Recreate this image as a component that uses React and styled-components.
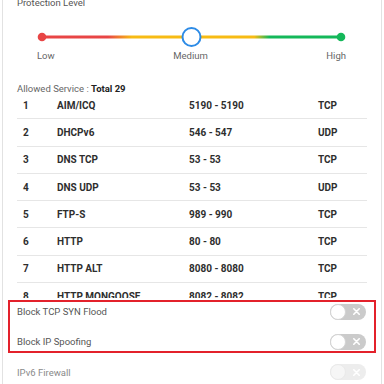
import React, { useEffect, useRef } from 'react';
import styled, { createGlobalStyle } from 'styled-components';

const GlobalStyle = createGlobalStyle`
	html, body {
		margin: 0;
		padding: 0;
		background: #fff;
		overflow: hidden;
	}
	body {
		font-family: Roboto, "Liberation Sans", Arial, sans-serif;
	}
`;

const Page = styled.div`
	height: 384px;
	overflow: hidden;
`;

const Card = styled.div`
	box-sizing: border-box;
	width: 380px;
	height: 400px;
	margin-left: 2px;
	padding: 0 14px;
	border-left: 1px solid #e2e2e2;
	border-right: 1px solid #e2e2e2;
`;

const Title = styled.div`
	margin-top: -3px;
	font-size: 9.5px;
	line-height: 12px;
	color: #555;
`;

const Slider = styled.div`
	margin-top: 16px;
	height: 24px;
	svg {
		display: block;
	}
`;

const SliderLabels = styled.div`
	display: flex;
	justify-content: space-between;
	margin: 1px 0 0 20px;
	width: 309px;
	font-size: 9.5px;
	line-height: 12px;
	color: #666;
`;

const Summary = styled.div`
	margin-top: 21px;
	font-size: 9.5px;
	line-height: 12px;
	color: #666;
	b {
		color: #222;
		font-weight: 700;
	}
`;

const ScrollArea = styled.div`
	margin-top: 6px;
	height: 196.5px;
	overflow: hidden;
`;

const Row = styled.div`
	box-sizing: border-box;
	display: grid;
	grid-template-columns: 34px 132px 129px 1fr;
	align-items: center;
	height: 27.3px;
	padding-left: 6px;
	border-bottom: 1px solid #e6e6e6;
	font-size: 10px;
	font-weight: 700;
	color: #2e2e2e;
`;

const Highlight = styled.div`
	display: flex;
	flex-direction: column;
	gap: 11px;
	margin: 2.5px -9px 0;
	padding: 0 8px 0 7px;
	border: 2px solid #e3212b;
`;

const OptionRow = styled.div`
	display: flex;
	align-items: center;
	justify-content: space-between;
	height: 19px;
	font-size: 9.5px;
	color: ${(p) => (p.disabled ? '#8a8a8a' : '#555')};
`;

const Plain = styled.div`
	margin-top: 9.5px;
	padding-right: 1px;
`;

const Toggle = styled.div`
	position: relative;
	box-sizing: border-box;
	width: 36px;
	height: 16px;
	border-radius: 8px;
	background: ${(p) => (p.disabled ? '#ededed' : '#cbcbcb')};
	&::before {
		content: '';
		position: absolute;
		left: 0;
		top: 0;
		box-sizing: border-box;
		width: 16px;
		height: 16px;
		border-radius: 50%;
		background: ${(p) => (p.disabled ? '#f6f6f6' : '#fff')};
		border: 1px solid ${(p) => (p.disabled ? '#eaeaea' : '#d4d4d4')};
	}
	svg {
		position: absolute;
		right: 6px;
		top: 4.5px;
	}
`;

const services = [
	['1', 'AIM/ICQ', '5190 - 5190', 'TCP'],
	['2', 'DHCPv6', '546 - 547', 'UDP'],
	['3', 'DNS TCP', '53 - 53', 'TCP'],
	['4', 'DNS UDP', '53 - 53', 'UDP'],
	['5', 'FTP-S', '989 - 990', 'TCP'],
	['6', 'HTTP', '80 - 80', 'TCP'],
	['7', 'HTTP ALT', '8080 - 8080', 'TCP'],
	['8', 'HTTP MONGOOSE', '8082 - 8082', 'TCP'],
	['9', 'HTTPS', '443 - 443', 'TCP'],
];

function Switch({ disabled }) {
	return (
		<Toggle disabled={disabled}>
			<svg width="7" height="7" viewBox="0 0 7 7">
				<path d="M0.8 0.8 L6.2 6.2 M6.2 0.8 L0.8 6.2" stroke="#fff" strokeWidth="1.6" strokeLinecap="round" />
			</svg>
		</Toggle>
	);
}

function LevelSlider() {
	return (
		<Slider>
			<svg width="350" height="24" viewBox="0 0 350 24">
				<defs>
					<linearGradient id="lvl" x1="25" x2="324" y1="0" y2="0" gradientUnits="userSpaceOnUse">
						<stop offset="0.22" stopColor="#e84545" />
						<stop offset="0.3" stopColor="#f7bb14" />
						<stop offset="0.71" stopColor="#f7bb14" />
						<stop offset="0.76" stopColor="#14b85a" />
					</linearGradient>
				</defs>
				<rect x="25" y="10.5" width="299" height="3" fill="url(#lvl)" />
				<circle cx="25" cy="12" r="4.3" fill="#e84545" />
				<circle cx="324" cy="12" r="4.3" fill="#14b85a" />
				<circle cx="174.5" cy="12" r="9" fill="#fff" stroke="#2d8be6" strokeWidth="2" />
			</svg>
		</Slider>
	);
}

export default function App() {
	const scrollRef = useRef(null);

	useEffect(() => {
		if (scrollRef.current) scrollRef.current.scrollTop = 9;
	}, []);

	return (
		<Page>
			<GlobalStyle />
			<Card>
				<Title>Protection Level</Title>
				<LevelSlider />
				<SliderLabels>
					<span>Low</span>
					<span>Medium</span>
					<span>High</span>
				</SliderLabels>
				<Summary>
					Allowed Service : <b>Total 29</b>
				</Summary>
				<ScrollArea ref={scrollRef}>
					{services.map((s) => (
						<Row key={s[0]}>
							<span>{s[0]}</span>
							<span>{s[1]}</span>
							<span>{s[2]}</span>
							<span>{s[3]}</span>
						</Row>
					))}
				</ScrollArea>
				<Highlight>
					<OptionRow>
						<span>Block TCP SYN Flood</span>
						<Switch />
					</OptionRow>
					<OptionRow>
						<span>Block IP Spoofing</span>
						<Switch />
					</OptionRow>
				</Highlight>
				<Plain>
					<OptionRow disabled>
						<span>IPv6 Firewall</span>
						<Switch disabled />
					</OptionRow>
				</Plain>
			</Card>
		</Page>
	);
}
